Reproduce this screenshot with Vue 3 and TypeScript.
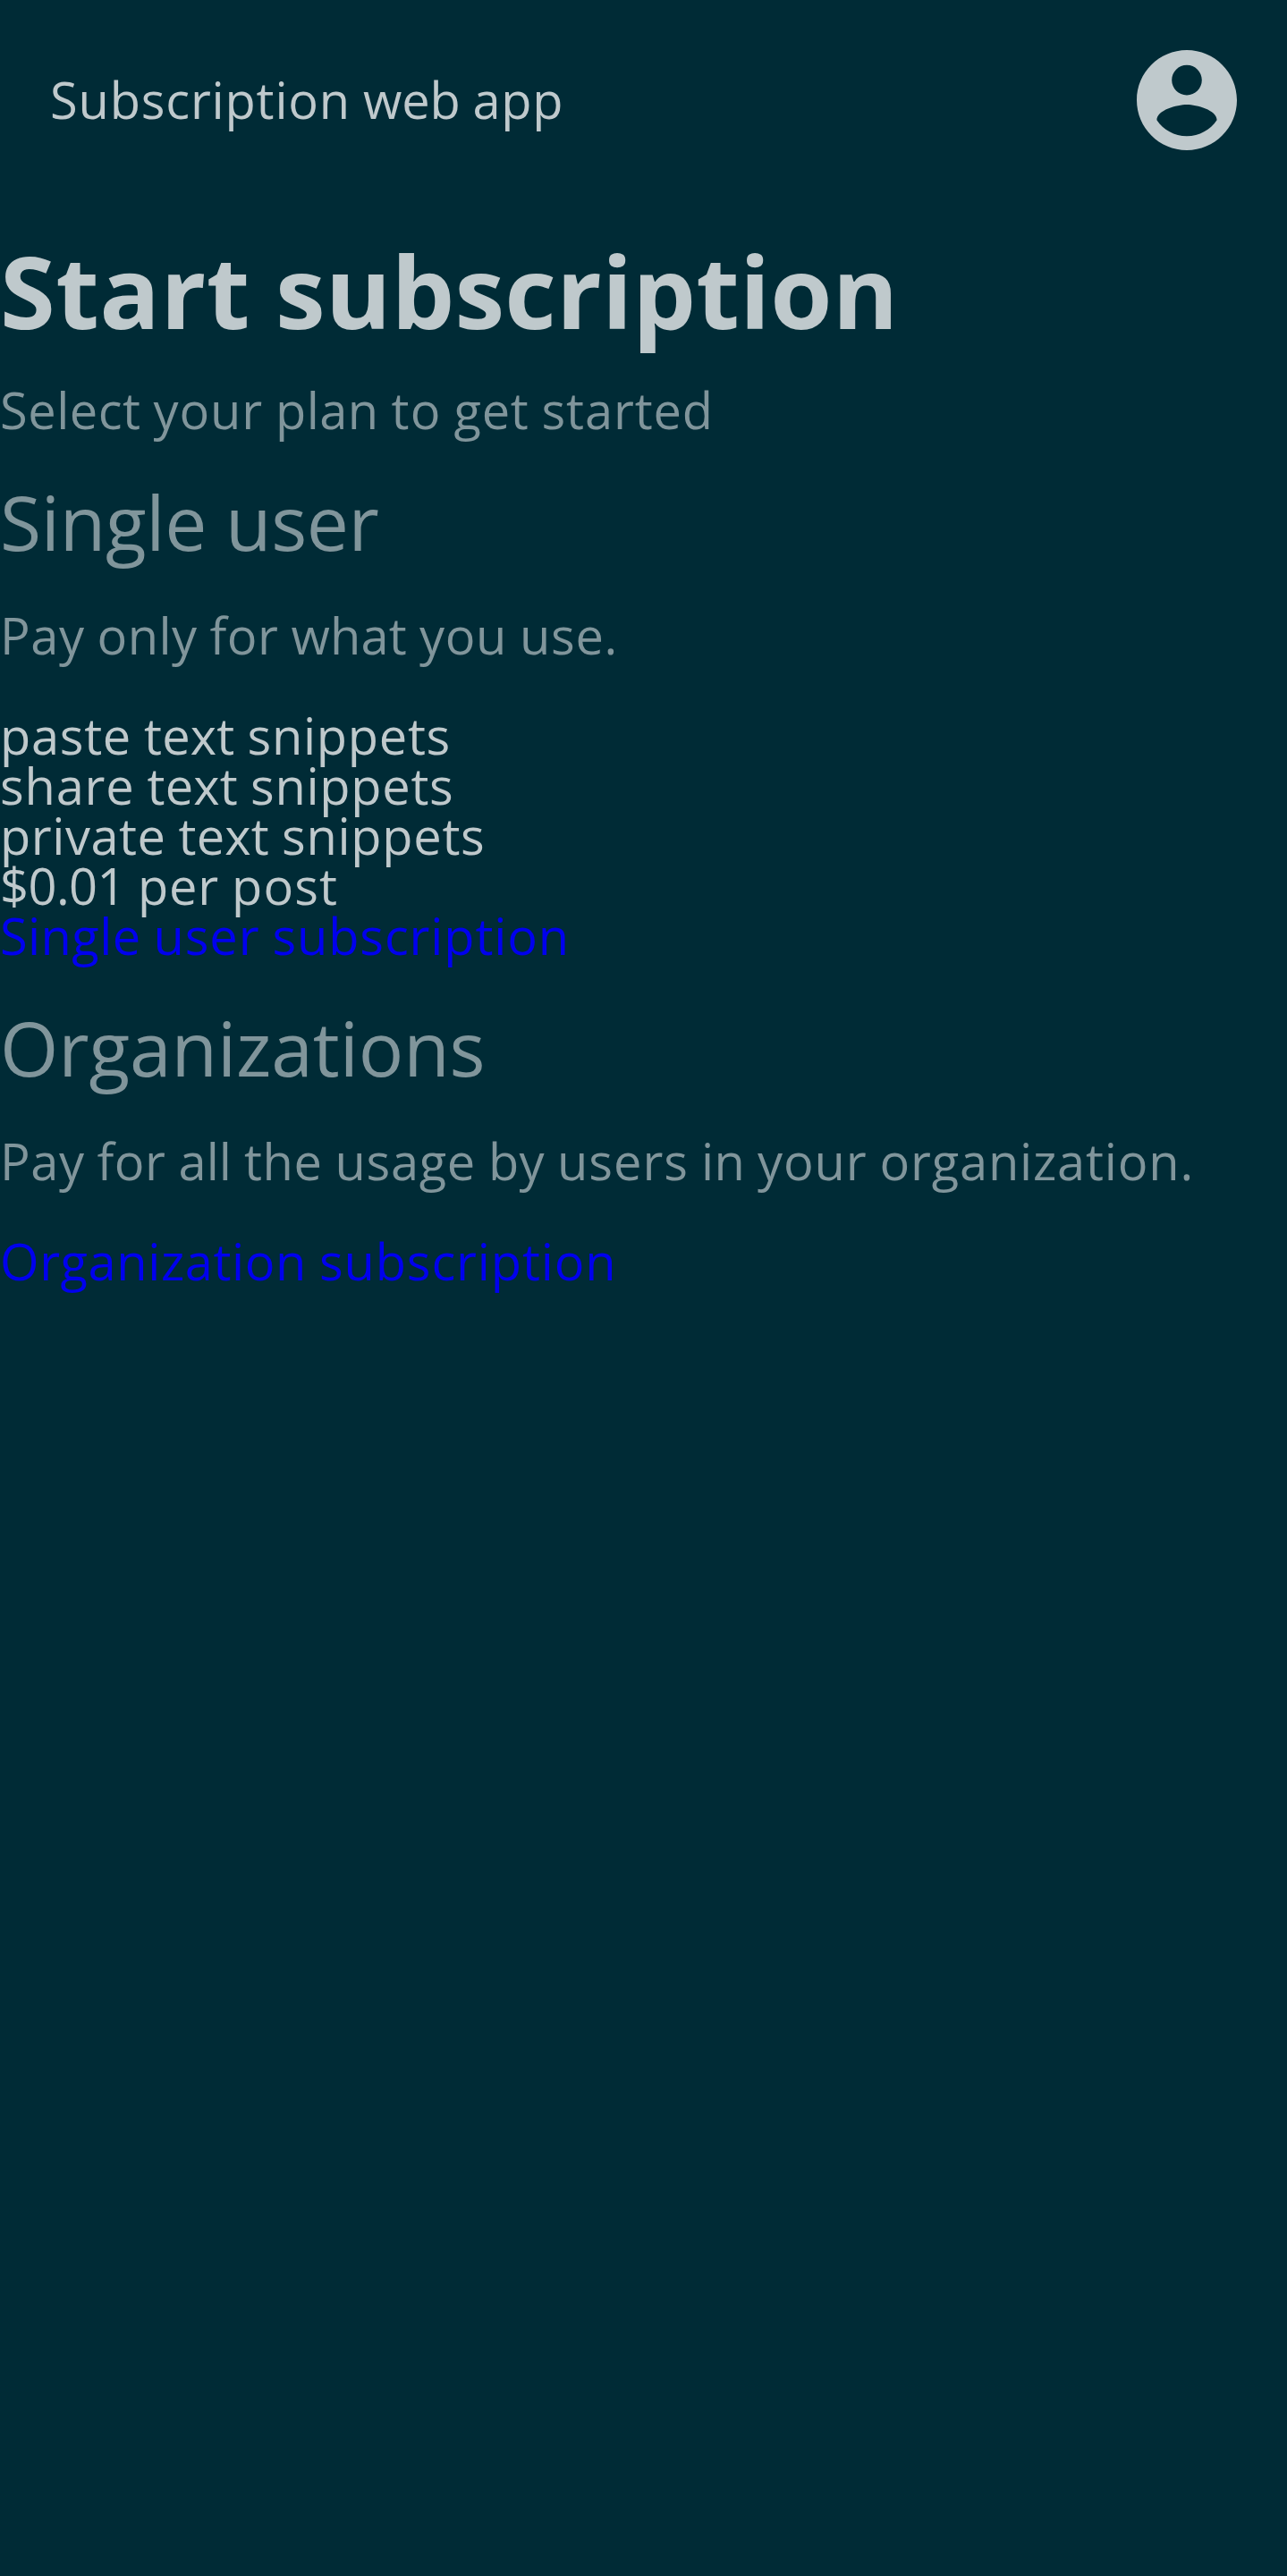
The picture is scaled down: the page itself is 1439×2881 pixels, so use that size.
<script setup lang="ts">
import { h, type FunctionalComponent } from 'vue'

const features: string[] = [
  'paste text snippets',
  'share text snippets',
  'private text snippets',
  '$0.01 per post',
]

// The design grid is a 411px wide phone layout shown at 3.5x.
const SCALE = 3.5
const EM = 2048
const canvas = document.createElement('canvas').getContext('2d')!

// Letter spacing that brings a run's advances onto whole grid pixels.
function tracking(run: string, size: number, weight: number): number {
  canvas.font = `${weight} ${EM}px "Open Sans"`
  let delta = 0
  for (const char of run) {
    const advance = (canvas.measureText(char).width / EM) * size
    delta += Math.round(advance) - advance
  }
  return (delta * SCALE) / run.length
}

const GridText: FunctionalComponent<{ text: string; size?: number; weight?: number }> = (props) =>
  h(
    'span',
    (props.text.match(/[a-z]+|[^a-z]+/gi) ?? []).map((run) =>
      h(
        'span',
        { style: { letterSpacing: `${tracking(run, props.size ?? 16, props.weight ?? 400)}px` } },
        run,
      ),
    ),
  )
GridText.props = ['text', 'size', 'weight']
</script>

<template>
  <div class="page">
    <header class="bar">
      <div class="brand"><GridText text="Subscription web app" /></div>
      <svg class="account" viewBox="2 2 20 20" aria-label="Account">
        <path d="M12 2C6.48 2 2 6.48 2 12s4.48 10 10 10 10-4.48 10-10S17.52 2 12 2zm0 3c1.66 0 3 1.34 3 3s-1.34 3-3 3-3-1.34-3-3 1.34-3 3-3zm0 14.2c-2.5 0-4.71-1.28-6-3.22.03-1.99 4-3.08 6-3.08 1.99 0 5.97 1.09 6 3.08-1.29 1.94-3.5 3.22-6 3.22z" />
      </svg>
    </header>
    <main>
      <h1><GridText text="Start subscription" :size="32" :weight="700" /></h1>
      <p class="lead"><GridText text="Select your plan to get started" /></p>
      <section>
        <h2><GridText text="Single user" :size="24" /></h2>
        <p><GridText text="Pay only for what you use." /></p>
        <ul>
          <li v-for="feature in features" :key="feature"><GridText :text="feature" /></li>
        </ul>
        <a href="#single"><GridText text="Single user subscription" /></a>
      </section>
      <section>
        <h2><GridText text="Organizations" :size="24" /></h2>
        <p><GridText text="Pay for all the usage by users in your organization." /></p>
        <a href="#organization"><GridText text="Organization subscription" /></a>
      </section>
    </main>
  </div>
</template>

<style>
body {
  margin: 0;
  background: #002b36;
}
</style>

<style scoped>
.page {
  min-height: 2881px;
  color: #bfc9cc;
  font: 56px/56px "Open Sans", sans-serif;
  font-kerning: none;
  font-variant-ligatures: none;
}
.bar {
  height: 224px;
  padding: 0 56.5px 0 56px;
  box-sizing: border-box;
  display: flex;
  align-items: center;
  justify-content: space-between;
}
.brand {
  margin-bottom: 2px;
}
.account {
  width: 112px;
  height: 112px;
  fill: currentColor;
}
main {
  padding-top: 45px;
}
h1 {
  margin: 0;
  font-size: 112px;
  line-height: 111px;
  font-weight: 700;
}
p {
  margin: 0 0 56px;
  color: #80959b;
}
.lead {
  margin: 50px 0 0;
}
h2 {
  margin: 0;
  padding: 56px 0 57px;
  font-size: 84px;
  line-height: 83px;
  font-weight: 400;
  color: #80959b;
}
ul {
  margin: 0;
  padding: 0;
  list-style: none;
}
a {
  display: block;
  color: #0000ee;
  text-decoration: none;
}
</style>
